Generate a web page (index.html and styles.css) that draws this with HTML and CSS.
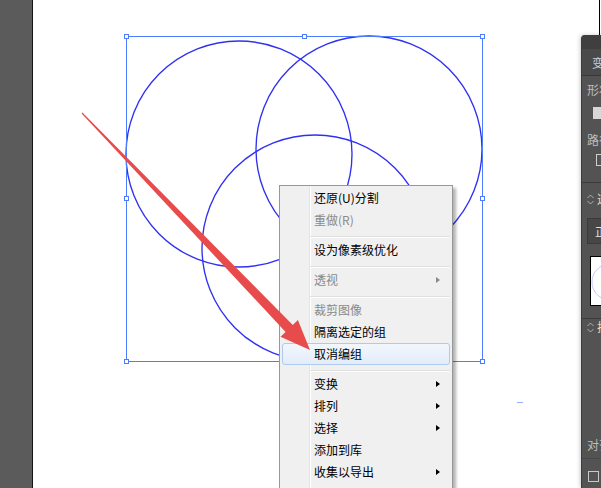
FILE: index.html
```html
<!DOCTYPE html>
<html lang="zh-CN">
<head>
<meta charset="utf-8">
<title>Illustrator</title>
<link rel="stylesheet" href="styles.css">
</head>
<body>
<div class="app">
  <aside class="toolbar"></aside>
  <main class="canvas">
    <svg class="art" width="568" height="488" viewBox="33 0 568 488">
      <line x1="599.5" y1="0" x2="599.5" y2="488" stroke="#000" stroke-width="1"/>
      <g fill="none" stroke="#3030f2" stroke-width="1.35">
        <circle cx="239" cy="154" r="113"/>
        <circle cx="369" cy="149" r="113"/>
        <circle cx="315" cy="248" r="113"/>
      </g>
      <rect x="126.5" y="36.5" width="356" height="325" fill="none" stroke="#4d7cfe" stroke-width="1"/>
      <g fill="#fff" stroke="#4d7cfe" stroke-width="1">
        <rect x="124.5" y="34.5" width="4" height="4"/>
        <rect x="302.5" y="34.5" width="4" height="4"/>
        <rect x="480.5" y="34.5" width="4" height="4"/>
        <rect x="124.5" y="196.5" width="4" height="4"/>
        <rect x="480.5" y="196.5" width="4" height="4"/>
        <rect x="124.5" y="359.5" width="4" height="4"/>
        <rect x="302.5" y="359.5" width="4" height="4"/>
        <rect x="480.5" y="359.5" width="4" height="4"/>
      </g>
      <line x1="517" y1="402.5" x2="523" y2="402.5" stroke="#8fb0ff" stroke-width="1"/>
    </svg>
  </main>
</div>

<div class="menu">
  <div class="item">还原(U)分割</div>
  <div class="item disabled">重做(R)</div>
  <div class="sep"></div>
  <div class="item">设为像素级优化</div>
  <div class="sep"></div>
  <div class="item disabled">透视<span class="arrow"></span></div>
  <div class="sep"></div>
  <div class="item disabled">裁剪图像</div>
  <div class="item">隔离选定的组</div>
  <div class="item hover">取消编组</div>
  <div class="sep"></div>
  <div class="item">变换<span class="arrow"></span></div>
  <div class="item">排列<span class="arrow"></span></div>
  <div class="item">选择<span class="arrow"></span></div>
  <div class="item">添加到库</div>
  <div class="item">收集以导出<span class="arrow"></span></div>
</div>

<div class="panel">
  <div class="panel-head"></div>
  <div class="panel-tabs">变换</div>
  <div class="sec sec1">
    <div class="label first">形状</div>
    <div class="shape-icon"></div>
    <div class="label second">路径</div>
    <div class="path-icon"></div>
  </div>
  <div class="sec sec2">
    <div class="sec-head">
      <svg class="chev" width="7" height="11" viewBox="0 0 7 11"><path d="M0.5 4 L3.5 1 L6.5 4 M0.5 7 L3.5 10 L6.5 7" fill="none" stroke="#b0b0b0" stroke-width="1"/></svg>
      <span class="sec-title">透明度</span>
    </div>
    <div class="field">正常</div>
    <div class="preview">
      <svg width="60" height="48" viewBox="0 0 60 48"><circle cx="19" cy="25" r="18" fill="none" stroke="#c9c6ff" stroke-width="1"/></svg>
    </div>
  </div>
  <div class="sec sec3">
    <div class="sec-head">
      <svg class="chev" width="7" height="11" viewBox="0 0 7 11"><path d="M0.5 4 L3.5 1 L6.5 4 M0.5 7 L3.5 10 L6.5 7" fill="none" stroke="#b0b0b0" stroke-width="1"/></svg>
      <span class="sec-title">排列</span>
    </div>
    <div class="label align">对齐</div>
    <div class="rule"></div>
    <div class="check"></div>
  </div>
</div>

<svg class="overlay" width="601" height="488" viewBox="0 0 601 488">
  <polygon points="81.6,113.4 285.6,331.9 280.5,336.7 310,350 297.9,320.1 292.8,324.9 82.4,112.6" fill="#e84b4b"/>
</svg>
</body>
</html>
```

FILE: styles.css
```css
html, body {
  margin: 0;
  padding: 0;
}

body {
  width: 601px;
  height: 488px;
  overflow: hidden;
  position: relative;
  background: #fff;
  font-family: "Noto Sans CJK SC", "Noto Sans", sans-serif;
}

.app {
  display: flex;
  height: 488px;
}

.toolbar {
  flex: none;
  width: 32px;
  background: #5b5b5b;
  border-right: 1px solid #141414;
}

.canvas {
  flex: 1;
  position: relative;
  background: #fff;
}

.art {
  display: block;
}

/* context menu */
.menu {
  position: absolute;
  left: 279px;
  top: 185px;
  width: 174px;
  box-sizing: border-box;
  padding: 1px 2px 12px;
  background-color: #f0f0f0;
  background-image: linear-gradient(to right, transparent 29px, #e2e3e3 29px, #e2e3e3 30px, #fff 30px, #fff 31px, transparent 31px);
  border: 1px solid #979797;
  box-shadow: 3px 3px 3px rgba(0, 0, 0, 0.3);
  font-size: 12px;
  color: #000;
  z-index: 5;
}

.item {
  height: 22px;
  box-sizing: border-box;
  display: flex;
  align-items: center;
  padding-left: 31px;
  padding-right: 9px;
  line-height: 14px;
  white-space: nowrap;
  border: 1px solid transparent;
  border-radius: 3px;
}

.item.disabled {
  color: #8a8a8a;
}

.item.hover {
  border-color: #aecbef;
  background: linear-gradient(#f2f7fd, #e3ecf9);
}

.arrow {
  margin-left: auto;
  width: 0;
  height: 0;
  border-left: 4px solid #000;
  border-top: 3.5px solid transparent;
  border-bottom: 3.5px solid transparent;
}

.disabled .arrow {
  border-left-color: #8a8a8a;
}

.sep {
  height: 0;
  margin: 5px 0 1px 28px;
  border-top: 1px solid #e0e0e0;
  border-bottom: 1px solid #fff;
}

/* floating panel */
.panel {
  position: absolute;
  left: 581px;
  top: 35px;
  width: 240px;
  bottom: 0;
  background: #535353;
  border-left: 1px solid #3c3c3c;
  border-top-left-radius: 4px;
  box-shadow: -1px 0 4px rgba(0, 0, 0, 0.2);
  overflow: hidden;
  font-size: 12px;
  color: #bdbdbd;
  z-index: 4;
}

.panel-head {
  height: 14px;
  background: #3f3f3f;
}

.panel-tabs {
  height: 26px;
  display: flex;
  align-items: center;
  padding-left: 10px;
  background: #4a4a4a;
  border-bottom: 1px solid #383838;
  color: #cfcfcf;
}

.sec {
  box-sizing: border-box;
  padding-left: 5px;
  border-bottom: 1px solid #3a3a3a;
  overflow: hidden;
}

.sec1 {
  height: 107px;
}

.sec2 {
  height: 136px;
}

.sec3 {
  border-bottom: none;
}

.label {
  line-height: 14px;
  white-space: nowrap;
}

.label.first {
  margin-top: 7px;
}

.label.second {
  margin-top: 14px;
}

.label.align {
  margin-top: 104px;
}

.shape-icon {
  margin-top: 10px;
  margin-left: 6px;
  width: 9px;
  height: 12px;
  background: #d8d8d8;
}

.path-icon {
  margin-top: 7px;
  margin-left: 9px;
  width: 7px;
  height: 10px;
  border: 1px solid #cfcfcf;
}

.sec-head {
  display: flex;
  align-items: center;
  gap: 3px;
  height: 14px;
  white-space: nowrap;
}

.sec2 .sec-head {
  margin-top: 9px;
}

.sec3 .sec-head {
  margin-top: 1px;
}

.chev {
  display: block;
  flex: none;
}

.sec-title {
  color: #e6dcc0;
  line-height: 14px;
}

.field {
  margin-top: 12px;
  height: 26px;
  box-sizing: border-box;
  width: 120px;
  display: flex;
  align-items: center;
  padding-left: 7px;
  border: 1px solid #3a3a3a;
  background: #474747;
  color: #e0e0e0;
}

.preview {
  margin-top: 12px;
  margin-left: 3px;
  width: 120px;
  height: 50px;
  box-sizing: border-box;
  border: 1px solid #000;
  background: #fff;
  overflow: hidden;
}

.preview svg {
  display: block;
}

.rule {
  margin-top: 6px;
  margin-left: -5px;
  height: 1px;
  background: #474747;
}

.check {
  margin-top: 12px;
  margin-left: 1px;
  width: 11px;
  height: 11px;
  box-sizing: border-box;
  border: 1px solid #c9c9c9;
}

.overlay {
  position: absolute;
  left: 0;
  top: 0;
  pointer-events: none;
  z-index: 10;
}
```
